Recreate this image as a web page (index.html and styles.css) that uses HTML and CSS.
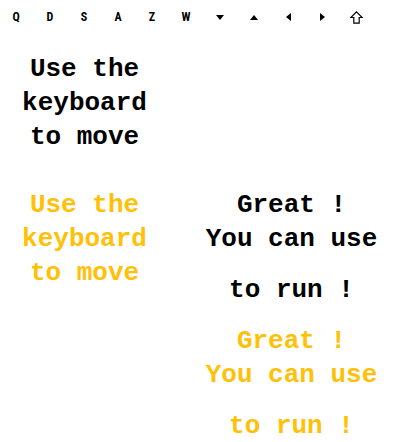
FILE: index.html
```html
<!DOCTYPE html>
<html>
<head>
<meta charset="utf-8">
<link rel="stylesheet" href="styles.css">
</head>
<body>
<nav class="keys">
  <span class="key">Q</span>
  <span class="key">D</span>
  <span class="key">S</span>
  <span class="key">A</span>
  <span class="key">Z</span>
  <span class="key">W</span>
  <span class="key"><svg width="8" height="5" viewBox="0 0 8 5"><path d="M0 0H8L4 5Z" fill="#000"/></svg></span>
  <span class="key"><svg width="8" height="5" viewBox="0 0 8 5"><path d="M0 5H8L4 0Z" fill="#000"/></svg></span>
  <span class="key"><svg width="5" height="8" viewBox="0 0 5 8"><path d="M5 0V8L0 4Z" fill="#000"/></svg></span>
  <span class="key"><svg width="5" height="8" viewBox="0 0 5 8"><path d="M0 0V8L5 4Z" fill="#000"/></svg></span>
  <span class="key"><svg width="13" height="13" viewBox="0 0 13 13"><path d="M6.5 0.8L12.2 6.5H9.2V12.2H3.8V6.5H0.8Z" fill="none" stroke="#000" stroke-width="1.2" stroke-linejoin="miter"/></svg></span>
</nav>
<main class="board">
  <div class="cell">
    <p class="msg">Use the<br>keyboard<br>to move</p>
  </div>
  <div class="cell"></div>
  <div class="cell">
    <p class="msg gold">Use the<br>keyboard<br>to move</p>
  </div>
  <div class="cell">
    <p class="msg">Great !<br>You can use</p>
    <p class="msg run">to run !</p>
  </div>
  <div class="cell"></div>
  <div class="cell">
    <p class="msg gold">Great !<br>You can use</p>
    <p class="msg gold run">to run !</p>
  </div>
</main>
</body>
</html>
```
FILE: styles.css
```css
html, body {
  margin: 0;
  padding: 0;
  background: #fff;
}
body {
  padding: 8px;
  font-family: "Liberation Mono", monospace;
}
.keys {
  display: flex;
  gap: 18px;
  height: 18px;
  align-items: center;
}
.key {
  width: 16px;
  display: flex;
  justify-content: center;
  align-items: center;
  font-family: "Liberation Sans Narrow", "Roboto Condensed", "Liberation Sans", sans-serif;
  font-weight: bold;
  font-size: 12px;
  color: #000;
}
.board {
  display: grid;
  grid-template-columns: 153px 217px;
  column-gap: 22px;
  grid-auto-rows: 136px;
  margin-top: 26px;
}
.msg {
  margin: 0;
  font-family: "Liberation Mono", monospace;
  font-weight: bold;
  font-size: 26px;
  line-height: 34px;
  text-align: center;
  color: #000;
}
.gold {
  color: #ffc107;
}
.run {
  margin-top: 17px;
}
```
